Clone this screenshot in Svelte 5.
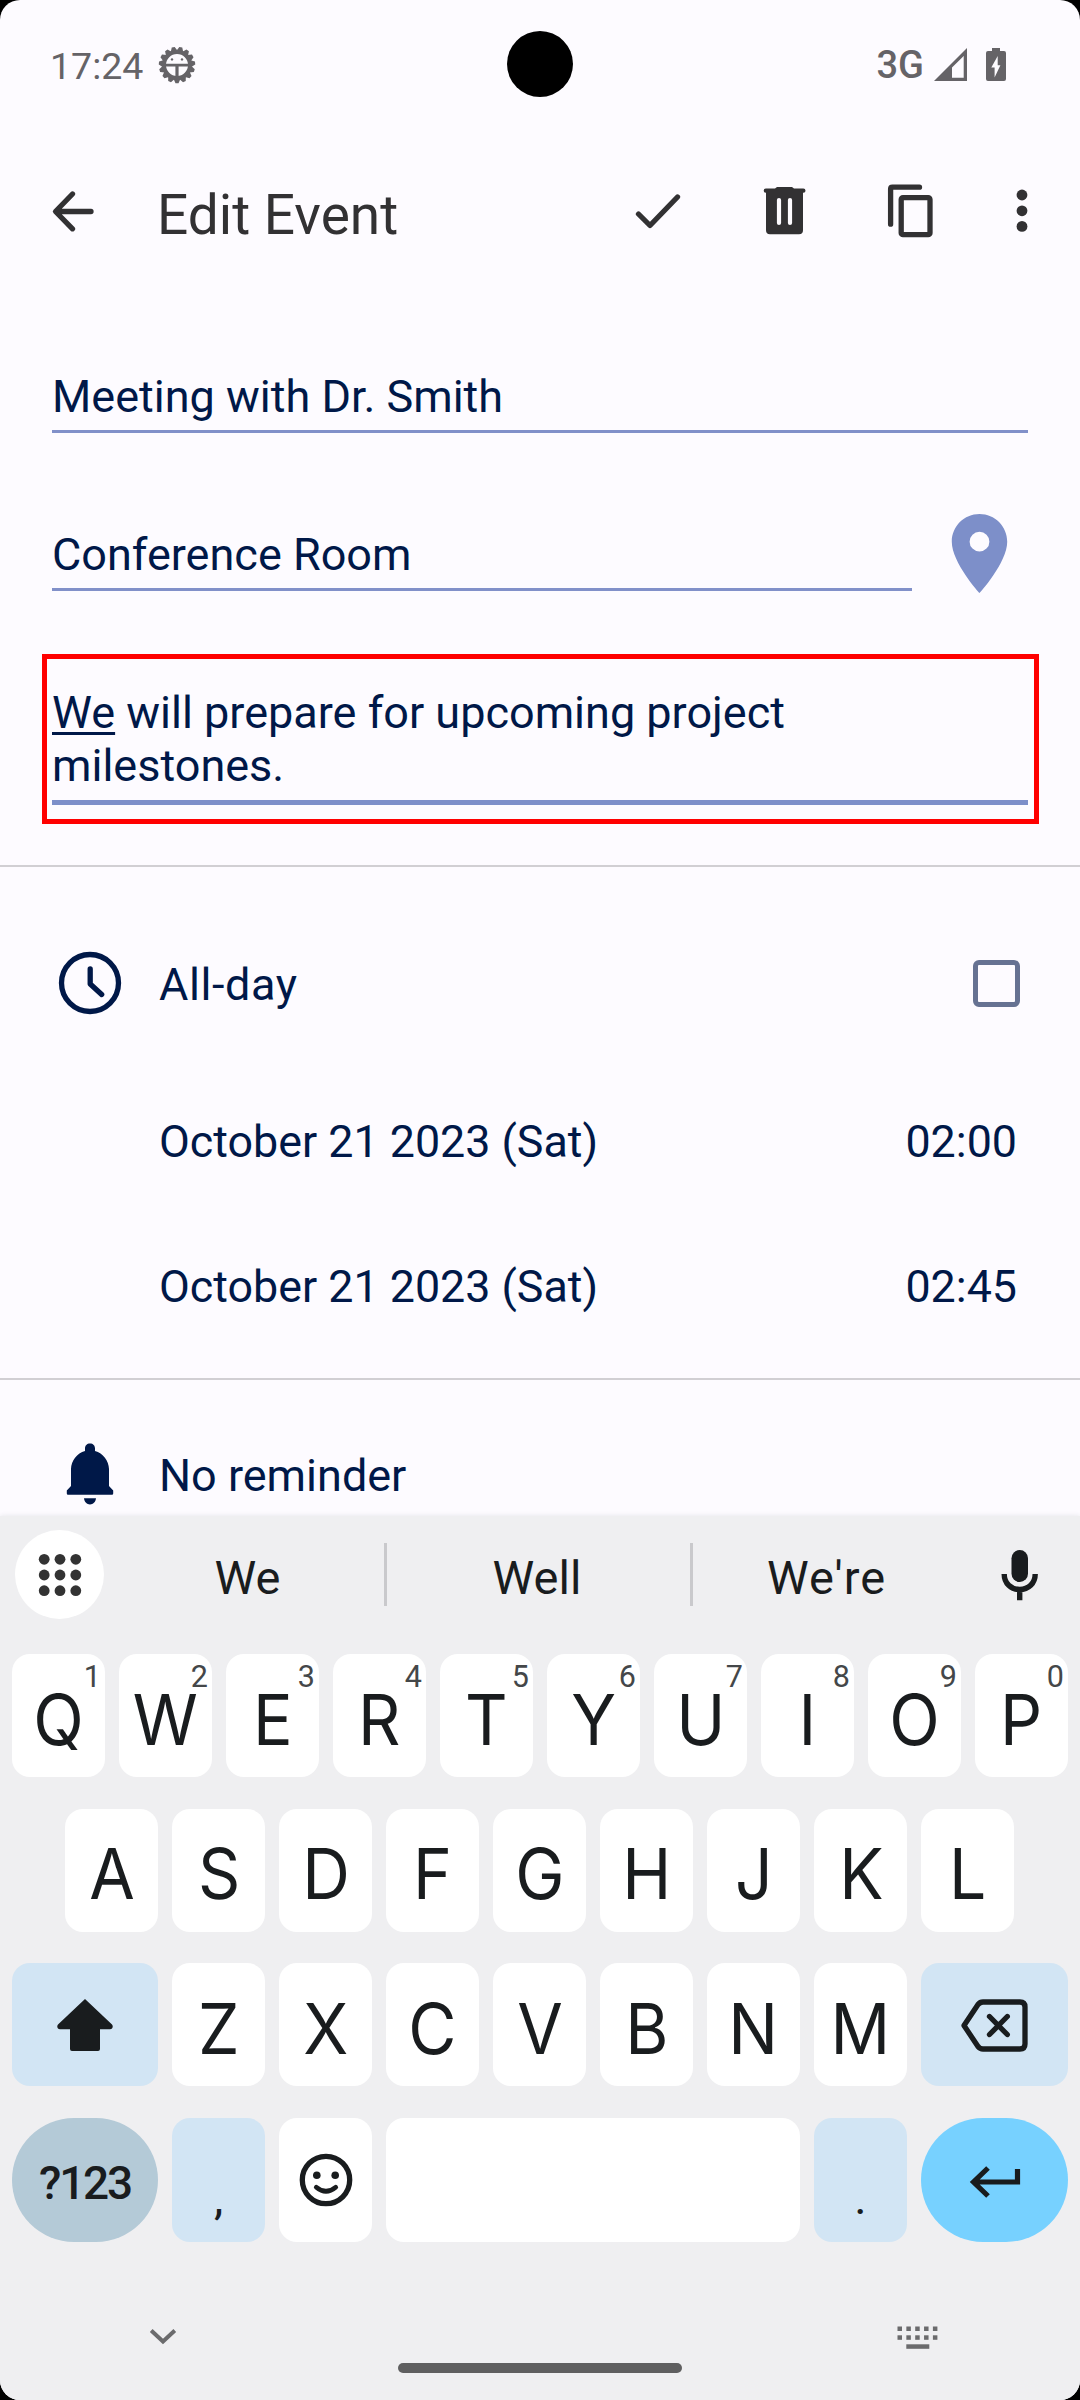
<script>
  const topRow = [...'QWERTYUIOP'].map((letter, i) => ({ letter, hint: (i + 1) % 10 }));
  const homeRow = [...'ASDFGHJKL'];
  const lastRow = [...'ZXCVBNM'];
  const dates = [
    { day: 'October 21 2023 (Sat)', time: '02:00' },
    { day: 'October 21 2023 (Sat)', time: '02:45' }
  ];
  const teeth = Array.from({ length: 15 }, (_, i) => i * 24 + 12);
  const grid = [0, 1, 2];
</script>

<div class="screen">
  <header class="status">
    <span class="time">17:24</span>
    <svg class="bug" width="38" height="38" viewBox="-19 -19 38 38">
      {#each teeth as a}
        <path d="M-3.4 -14L-1.5 -18.2H1.5L3.4 -14Z" transform="rotate({a})" />
      {/each}
      <circle r="13" fill="none" stroke="#656367" stroke-width="4" />
      <path d="M-12 -1.3H12V1.5H-12ZM-1.6 0H1.6V13H-1.6Z" />
      <circle cx="-5" cy="-5.6" r="1.2" />
      <circle cx="5" cy="-5.6" r="1.2" />
    </svg>
    <span class="network">3G</span>
    <svg class="signal" width="33" height="33" viewBox="0 0 33 33">
      <path fill-rule="evenodd" d="M33 0V33H0ZM29.7 8L18 19.5V29.7H29.7Z" />
    </svg>
    <svg width="20" height="33" viewBox="0 0 20 33">
      <path fill-rule="evenodd" d="M6 0H14V3H18Q20 3 20 5V31Q20 33 18 33H2Q0 33 0 31V5Q0 3 2 3H6ZM11.7 8L5.3 19.5H8.6V29.5L14.4 17.3H11.7Z" />
    </svg>
    <i class="camera"></i>
  </header>

  <nav class="toolbar">
    <svg class="back" width="44" height="44" viewBox="52 189 44 44">
      <path class="line" d="M92 211.5H57M73.5 194L56.5 211.5L73.5 228.8" />
    </svg>
    <h1>Edit Event</h1>
    <svg class="save" width="48" height="40" viewBox="634 191 48 40">
      <path class="line" d="M638.5 214L650 225.5L677.5 197" />
    </svg>
    <svg class="delete" width="44" height="50" viewBox="763 186 44 50">
      <path fill-rule="evenodd" d="M777 187H792L794 188.6H803.4A2 2 0 0 1 803.4 192.8H803V230.3Q803 234.3 799 234.3H770Q766 234.3 766 230.3V192.8H765.8A2 2 0 0 1 765.8 188.6H775ZM779 198Q776.9 198 776.9 200V223Q776.9 225 779 225T781.1 223V200Q781.1 198 779 198ZM790 198Q787.9 198 787.9 200V223Q787.9 225 790 225T792.1 223V200Q792.1 198 790 198Z" />
    </svg>
    <svg class="copy" width="46" height="54" viewBox="887 183.5 46 54">
      <path class="line" d="M890.6 223.7V188.5Q890.6 186.7 892.4 186.7H919.5" />
      <rect class="line" x="901.2" y="197.2" width="28.8" height="37" rx="1.8" />
    </svg>
    <svg width="12" height="44" viewBox="0 0 12 44">
      <circle cx="6" cy="6" r="5.4" /><circle cx="6" cy="21.8" r="5.4" /><circle cx="6" cy="37.4" r="5.4" />
    </svg>
  </nav>

  <section class="form">
    <div class="field">Meeting with Dr. Smith</div>
    <div class="place">
      <div class="field">Conference Room</div>
      <svg width="95" height="95" viewBox="0 0 24 24">
        <path d="M12 2C8.13 2 5 5.13 5 9c0 5.25 7 13 7 13s7-7.750 7-13c0-3.870-3.130-7-7-7zm0 9.500a2.500 2.500 0 0 1 0-5 2.500 2.500 0 0 1 0 5z" />
      </svg>
    </div>
    <div class="focused">
      <div class="field active"><u>We</u> will prepare for upcoming project milestones.</div>
    </div>
  </section>

  <section class="schedule">
    <div class="row all-day">
      <svg width="64" height="64" viewBox="58 951 64 64">
        <circle class="line" cx="90" cy="983" r="28.5" />
        <path class="line" d="M90.200 969V984L101.700 994.500" />
      </svg>
      <span>All-day</span>
      <i class="checkbox"></i>
    </div>
    {#each dates as d}
      <div class="row date"><span>{d.day}</span><span>{d.time}</span></div>
    {/each}
  </section>

  <section class="reminder">
    <svg width="48" height="62" viewBox="66 1443 48 62">
      <path d="M90 1443.500C93 1443.500 95 1445.500 95 1448.500V1451C103 1453.300 108.800 1460.500 109 1469V1486L113.200 1490.500V1493.500Q113.200 1494.700 112 1494.700H68Q66.800 1494.700 66.800 1493.500V1490.500L71 1486V1469C71.200 1460.500 77 1453.300 85 1451V1448.500C85 1445.500 87 1443.500 90 1443.500ZM84 1498.300H96C95.500 1502.300 93 1504.500 90 1504.500S84.500 1502.300 84 1498.300Z" />
    </svg>
    <span>No reminder</span>
  </section>

  <section class="keyboard">
    <div class="suggestions">
      <div class="apps">
        <svg width="44" height="44" viewBox="-22 -22 44 44">
          {#each grid as r}{#each grid as c}
            <circle cx={(c - 1) * 15.8} cy={(r - 1) * 15.7} r="5.4" />
          {/each}{/each}
        </svg>
      </div>
      <span class="word">We</span>
      <i></i>
      <span class="word middle">Well</span>
      <i></i>
      <span class="word last">We're</span>
      <svg class="mic" width="38" height="52" viewBox="1001 1548 38 52">
        <rect x="1011.500" y="1549" width="16.500" height="32" rx="8.200" />
        <path d="M1004.200 1573C1004.200 1582.500 1011 1588.500 1019.700 1588.500S1035.200 1582.500 1035.200 1573M1019.700 1588V1599.300" fill="none" stroke="#191c1e" stroke-width="5.400" />
      </svg>
    </div>

    <div class="keys">
      <div class="krow">
        {#each topRow as k}
          <div class="key"><b>{k.letter}</b><sup>{k.hint}</sup></div>
        {/each}
      </div>
      <div class="krow home-row">
        {#each homeRow as k}<div class="key"><b>{k}</b></div>{/each}
      </div>
      <div class="krow">
        <div class="key wide tint">
          <svg width="58" height="54" viewBox="56 1998 58 54">
            <path d="M85 1999L112 2024.500C113.600 2026.500 112.500 2029.300 110 2029.300H100V2049Q100 2051 98 2051H72Q70 2051 70 2049V2029.300H60C57.500 2029.300 56.400 2026.500 58 2024.500Z" />
          </svg>
        </div>
        {#each lastRow as k}<div class="key"><b>{k}</b></div>{/each}
        <div class="key wide tint">
          <svg class="erase" width="70" height="56" viewBox="959 2000 70 56">
            <path class="line" d="M963 2027.500L977 2006.500Q979 2004 982 2004H1019Q1024 2004 1024 2009V2046Q1024 2051 1019 2051H982Q979 2051 977 2048.500ZM988.500 2018.500L1006.300 2036.500M1006.300 2018.500L988.500 2036.500" />
          </svg>
        </div>
      </div>
      <div class="krow bottom">
        <div class="key wide symbols">?123</div>
        <div class="key tint punct">,</div>
        <div class="key">
          <svg width="54" height="54" viewBox="-27 -27 54 54">
            <circle class="line" r="23.700" />
            <circle cx="-9.200" cy="-4.800" r="3.800" /><circle cx="9.200" cy="-4.800" r="3.800" />
            <path class="line thin" d="M-9.700 7.200Q0 15.500 9.700 7.200" />
          </svg>
        </div>
        <div class="key space"></div>
        <div class="key tint punct">.</div>
        <div class="key wide enter">
          <svg width="52" height="34" viewBox="967 2166 52 34">
            <path d="M1015.500 2170V2183H973M986 2169L971.500 2183L986 2197" fill="none" stroke="#191c1e" stroke-width="5.200" />
          </svg>
        </div>
      </div>
    </div>

    <footer>
      <svg class="hide" width="28" height="18" viewBox="0 0 28 18">
        <path d="M2.200 2.500L14 13.500L25.800 2.500" fill="none" stroke="#6b6b6d" stroke-width="4" />
      </svg>
      <i class="home"></i>
      <svg class="switch" width="42" height="24" viewBox="0 0 42 24">
        {#each [0, 1, 2, 3, 4] as c}
          <rect x={0.5 + c * 8.85} y="0.500" width="4.500" height="4.500" />
          <rect x={0.5 + c * 8.85} y="9.300" width="4.500" height="4.500" />
        {/each}
        <rect x="9.300" y="18.300" width="23" height="4.500" />
      </svg>
    </footer>
  </section>
</div>

<style>
  :global(body) { margin: 0; background: #000; }
  .screen {
    width: 1080px; height: 2400px; box-sizing: border-box; overflow: hidden;
    display: flex; flex-direction: column; border-radius: 20px;
    background: #fdfbff; color: #001848;
    font: 45px/53px Roboto, sans-serif;
  }
  svg { display: block; flex: none; overflow: visible; }
  .line { fill: none; stroke: currentColor; stroke-width: 5.3; stroke-linecap: round; stroke-linejoin: round; }
  .thin { stroke-width: 4.8; }

  .status {
    position: relative; height: 128px; display: flex; align-items: center; box-sizing: border-box;
    padding: 0 74px 0 50px; color: #656367; fill: #656367;
  }
  .time { font-size: 37.5px; padding-top: 4px; }
  .bug { margin-left: 15px; margin-top: 2px; }
  .network { margin-left: auto; padding-top: 2px; font-size: 38px; font-weight: 500; }
  .signal { margin: 0 19px 0 10px; }
  .camera {
    position: absolute; left: 507px; top: 31px; width: 66px; height: 66px;
    border-radius: 50%; background: #000;
  }

  .toolbar {
    height: 168px; display: flex; align-items: center; box-sizing: border-box;
    padding: 0 52px 1px 51px; color: #323133; fill: #323133;
  }
  .toolbar svg { margin-top: -1px; }
  h1 { margin: 0 auto 0 62px; padding-top: 8px; font-size: 55px; font-weight: 400; }
  .save { margin-right: 81px; }
  .delete { margin-right: 80px; }
  .copy { margin-right: 83px; }

  .form { padding: 74px 52px 60px; }
  .field { padding: 0 0 7px; border-bottom: 3px solid #8190c9; }
  .place { display: flex; margin: 95px 0 63px; height: 63px; fill: #7d8fc9; }
  .place .field { width: 860px; }
  .place svg { margin: -22px 0 0 20px; }
  .focused { margin: 0 -11px -19px -10px; padding: 27px 6px 14px 5px; border: 5px solid #f00; }
  .active { padding: 0 120px 8px 0; border-bottom: 5px solid #7d8fc9; }
  u { text-decoration-thickness: 2.500px; text-underline-offset: 4px; text-decoration-skip-ink: none; }

  .schedule { padding: 32px 0 19px; border: solid #d1cfd3; border-width: 2px 0; }
  .row { display: flex; align-items: center; justify-content: space-between; height: 145px; }
  .all-day { height: 170px; padding: 0 60px 0 58px; justify-content: flex-start; }
  .all-day svg, .checkbox { margin-bottom: 2px; }
  .all-day span { margin-left: 37px; letter-spacing: 0.6px; }
  .checkbox {
    width: 37px; height: 37px; margin-left: auto; border: 5.300px solid #667292; border-radius: 6px;
  }
  .date { padding: 0 63px 0 159px; font-size: 44.8px; }

  .reminder {
    height: 136px; box-sizing: border-box; display: flex; padding: 63px 0 0 66px; fill: #001848;
  }
  .reminder span { margin: 6px 0 0 45px; }

  .keyboard {
    flex: 1; display: flex; flex-direction: column; background: #efeff1;
    color: #191c1e; fill: #191c1e; box-shadow: 0 0 5px #e4e4e8;
  }
  .suggestions { height: 117px; margin-bottom: 21px; display: flex; align-items: center; }
  .apps {
    width: 89px; height: 89px; margin-left: 15px; border-radius: 50%; background: #fff;
    display: flex; align-items: center; justify-content: center; fill: #333;
  }
  .suggestions i { width: 3px; height: 63px; background: #c9c9cc; }
  .word { width: 273px; margin-left: 7px; padding-top: 6px; text-align: center; font-size: 47px; }
  .middle { width: 300px; margin: 0; padding-right: 3px; }
  .last { width: 267px; margin: 0; letter-spacing: 1px; }
  .mic { margin-left: 41px; }

  .keys { display: flex; flex-direction: column; gap: 31.500px; padding: 0 12px; }
  .krow { display: flex; gap: 14px; height: 123px; }
  .home-row { padding-left: 53.400px; }
  .bottom { height: 124px; }
  .key {
    position: relative; width: 93px; border-radius: 18px; background: #fff;
    display: flex; align-items: center; justify-content: center;
  }
  .key b { font: 400 69.500px/56px Inter, sans-serif; padding-top: 8px; transform: scaleX(0.950); }
  .key sup {
    position: absolute; right: 4px; top: 8px; font: 400 30.500px/29px Roboto, sans-serif; color: #444749;
  }
  .wide { width: 146px; }
  .wide:last-child { width: 147px; }
  .tint { background: #d2e5f4; }
  .erase { margin-top: 3px; }
  .symbols {
    border-radius: 62px; background: #b4cad7; box-sizing: border-box; padding-top: 6px;
    font: 500 46px/54px Roboto, sans-serif; letter-spacing: -2.200px;
  }
  .punct { font-size: 47px; align-items: flex-end; box-sizing: border-box; padding-bottom: 18px; }
  .space { width: 414px; }
  .enter { border-radius: 62px; background: #77d1ff; }
  .enter svg { margin-top: 5px; }

  footer { flex: 1; display: flex; padding: 85px 0 0 149px; }
  .hide { margin-top: 1px; }
  .home { width: 284px; height: 10.500px; margin: 36px 0 0 221px; border-radius: 6px; background: #5f5f60; }
  .switch { margin: -1px 0 0 215px; fill: #6b6b6d; }
</style>
